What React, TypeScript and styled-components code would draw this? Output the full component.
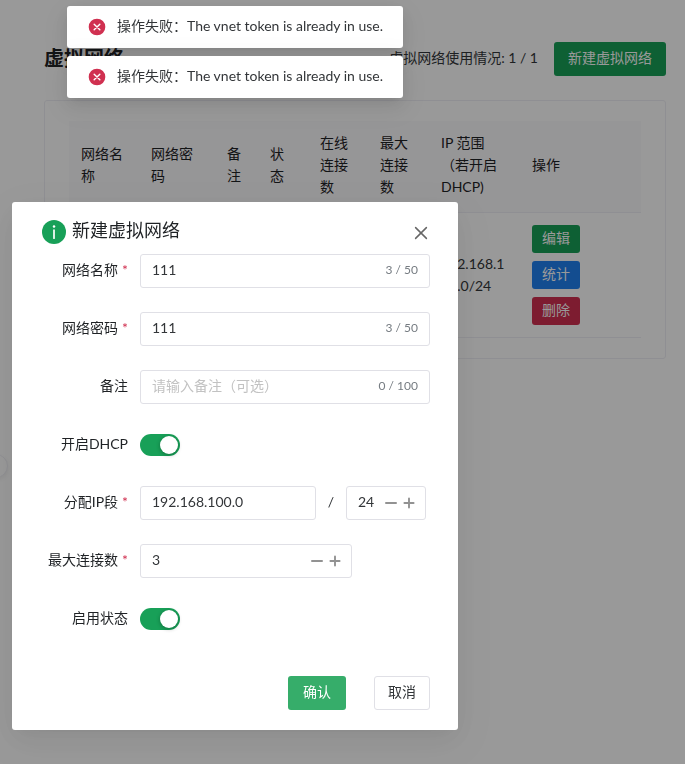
import React, { useState } from "react";
import styled, { createGlobalStyle } from "styled-components";

const GlobalStyle = createGlobalStyle`
  *, *::before, *::after { box-sizing: border-box; }
  html, body { margin: 0; background: #fff; }
  body, button, input {
    font-family: Lato, "Noto Sans CJK SC", sans-serif;
    font-size: 14px;
    line-height: 22px;
  }
  body { color: #333639; overflow: hidden; }
`;

const tones = {
  primary: "#18a058",
  hover: "#36ad6a",
  info: "#2080f0",
  error: "#d03050",
};

/* ---------- page ---------- */

const Page = styled.main`
  padding: 42px 19px 24px 44px;
`;

const PageHeader = styled.header`
  display: flex;
  align-items: center;
  justify-content: space-between;
  height: 34px;
  margin-bottom: 24px;
`;

const PageTitle = styled.h1`
  margin: 0;
  padding-bottom: 2px;
  font-size: 20px;
  line-height: 32px;
  font-weight: 700;
  color: #1f2225;
`;

const HeaderActions = styled.div`
  display: flex;
  align-items: center;
  gap: 16px;
`;

const Usage = styled.span`
  padding-bottom: 2px;
`;

const Button = styled.button<{ $tone?: keyof typeof tones; $small?: boolean; $pad?: number }>`
  height: ${(p) => (p.$small ? 28 : 34)}px;
  padding: 0 ${(p) => p.$pad ?? (p.$small ? 10 : 14)}px 2px;
  border: ${(p) => (p.$tone ? "0" : "1px solid #e0e0e6")};
  border-radius: 3px;
  background: ${(p) => (p.$tone ? tones[p.$tone] : "#fff")};
  color: ${(p) => (p.$tone ? "#fff" : "#333639")};
  white-space: nowrap;
  cursor: pointer;
`;

const Card = styled.section`
  padding: 20px 24px;
  border: 1px solid #efeff5;
  border-radius: 3px;
`;

const Table = styled.table`
  width: 100%;
  table-layout: fixed;
  border-collapse: separate;
  border-spacing: 0;
`;

const Col = styled.col<{ $w?: number }>`
  width: ${(p) => (p.$w ? `${p.$w}px` : "auto")};
`;

const Th = styled.th`
  padding: 11px 12px 14px;
  background: #fafafc;
  border-bottom: 1px solid #efeff5;
  color: #1f2225;
  font-weight: 400;
  text-align: left;
`;

const Td = styled.td`
  padding: 12px;
  border-bottom: 1px solid #efeff5;
  word-break: break-all;
`;

const RowActions = styled.div`
  display: flex;
  flex-direction: column;
  align-items: flex-start;
  gap: 8px;
`;

const SiderToggle = styled.button`
  position: absolute;
  top: 454px;
  left: -16px;
  width: 24px;
  height: 24px;
  padding: 0;
  border: 1px solid #efeff5;
  border-radius: 50%;
  background: #fff;
  box-shadow: 0 2px 4px 0 rgba(0, 0, 0, 0.06);
`;

/* ---------- dialog ---------- */

const Overlay = styled.div`
  position: fixed;
  inset: 0;
  padding: 202px 12px 24px;
  background: rgba(0, 0, 0, 0.4);
`;

const Dialog = styled.section`
  position: relative;
  max-width: 446px;
  padding: 16px 28px 20px;
  border-radius: 3px;
  background: #fff;
  box-shadow: 0 6px 16px -9px rgba(0, 0, 0, 0.08), 0 9px 28px 0 rgba(0, 0, 0, 0.05),
    0 12px 48px 16px rgba(0, 0, 0, 0.03);
`;

const DialogTitle = styled.h2`
  display: flex;
  align-items: center;
  gap: 4px;
  margin: 0 0 8px;
  font-size: 18px;
  line-height: 28px;
  font-weight: 400;
  color: #1f2225;
`;

const TitleText = styled.span`
  padding-bottom: 4px;
  line-height: 24px;
`;

const CloseButton = styled.button`
  position: absolute;
  top: 20px;
  right: 26px;
  display: grid;
  place-items: center;
  width: 22px;
  height: 22px;
  padding: 0;
  border: 0;
  background: none;
  color: #666;
  cursor: pointer;
`;

const Form = styled.form`
  display: flex;
  flex-direction: column;
  gap: 24px;
`;

const FormItem = styled.div`
  display: grid;
  grid-template-columns: 100px 1fr;
  align-items: center;
  min-height: 34px;
`;

const Label = styled.label`
  padding: 0 12px 2px 0;
  text-align: right;
  white-space: nowrap;
  color: #1f2225;
`;

const Required = styled.span`
  margin-left: 4px;
  color: #d03050;
`;

const Field = styled.div<{ $w?: number }>`
  display: flex;
  align-items: center;
  width: ${(p) => (p.$w ? `${p.$w}px` : "100%")};
  height: 34px;
  padding: 0 7px 0 11px;
  border: 1px solid #e0e0e6;
  border-radius: 3px;
`;

const TextInput = styled.input`
  flex: 1;
  min-width: 0;
  width: 0;
  height: 32px;
  padding: 0 0 4px;
  border: 0;
  outline: 0;
  background: none;
  color: #333639;
  appearance: textfield;
  &::placeholder { color: #c2c2c2; opacity: 1; }
  &::-webkit-inner-spin-button { display: none; }
`;

const Count = styled.span`
  padding: 0 4px 2px 8px;
  font-size: 12px;
  color: #767c82;
`;

const StepButton = styled.button`
  display: grid;
  place-items: center;
  width: 18px;
  height: 18px;
  padding: 0;
  border: 0;
  background: none;
  color: #929292;
  cursor: pointer;
`;

const Inline = styled.div`
  display: flex;
  align-items: center;
`;

const Slash = styled.span`
  width: 30px;
  padding-bottom: 2px;
  text-align: center;
`;

const Switch = styled.input`
  display: flex;
  align-items: center;
  width: 40px;
  height: 22px;
  margin: 0;
  padding: 2px;
  appearance: none;
  border-radius: 11px;
  background: #dbdbdb;
  cursor: pointer;
  &::before {
    content: "";
    width: 18px;
    height: 18px;
    border-radius: 50%;
    background: #fff;
    box-shadow: 0 1px 4px 0 rgba(0, 0, 0, 0.3);
  }
  &:checked { justify-content: flex-end; background: #18a058; }
`;

const DialogFooter = styled.footer`
  display: flex;
  justify-content: flex-end;
  gap: 28px;
  margin-top: 16px;
`;

/* ---------- messages ---------- */

const MessageStack = styled.div`
  position: fixed;
  top: 6px;
  left: 67px;
  display: flex;
  flex-direction: column;
  align-items: flex-start;
  gap: 8px;
`;

const Message = styled.div`
  display: flex;
  align-items: center;
  gap: 10px;
  height: 42px;
  padding: 0 20px;
  border-radius: 3px;
  background: #fff;
  white-space: nowrap;
  box-shadow: 0 3px 6px -4px rgba(0, 0, 0, 0.12), 0 6px 16px 0 rgba(0, 0, 0, 0.08),
    0 9px 28px 8px rgba(0, 0, 0, 0.05);
`;

const MessageText = styled.span`
  padding-bottom: 2px;
`;

/* ---------- icons ---------- */

const ErrorIcon = () => (
  <svg width="20" height="20" viewBox="0 0 48 48" aria-hidden="true">
    <circle cx="24" cy="24" r="20" fill="#d03050" />
    <path d="M17.2 17.2 30.8 30.8M30.8 17.2 17.2 30.8" stroke="#fff" strokeWidth="3.4" strokeLinecap="round" />
  </svg>
);

const InfoIcon = () => (
  <svg width="28" height="28" viewBox="0 0 28 28" aria-hidden="true">
    <circle cx="14" cy="14" r="12" fill="#18a058" />
    <circle cx="14" cy="8.5" r="1.25" fill="#fff" />
    <path d="M14 12v8.2" stroke="#fff" strokeWidth="1.7" strokeLinecap="round" />
  </svg>
);

const CloseIcon = () => (
  <svg width="18" height="18" viewBox="0 0 12 12" aria-hidden="true">
    <path d="M2.4 2.4 9.6 9.6M9.6 2.4 2.4 9.6" stroke="currentColor" strokeWidth="1" strokeLinecap="round" />
  </svg>
);

const MinusIcon = () => (
  <svg width="18" height="18" viewBox="0 0 18 18" aria-hidden="true">
    <path d="M4 9h10" stroke="currentColor" strokeWidth="2" strokeLinecap="round" />
  </svg>
);

const PlusIcon = () => (
  <svg width="18" height="18" viewBox="0 0 18 18" aria-hidden="true">
    <path d="M4.4 9h9.2M9 4.4v9.2" stroke="currentColor" strokeWidth="1.9" strokeLinecap="round" />
  </svg>
);

/* ---------- parts ---------- */

const columns = [
  { title: "网络名称", w: 70 },
  { title: "网络密码", w: 76 },
  { title: "备注", w: 43 },
  { title: "状态", w: 50 },
  { title: "在线连接数", w: 60 },
  { title: "最大连接数", w: 61 },
  { title: "IP 范围（若开启 DHCP)", w: 91 },
  { title: "操作" },
];

type ItemProps = { id: string; label: string; required?: boolean; children: React.ReactNode };

const Item = ({ id, label, required, children }: ItemProps) => (
  <FormItem>
    <Label htmlFor={id}>
      {label}
      {required && <Required>*</Required>}
    </Label>
    {children}
  </FormItem>
);

type CountedProps = { id: string; initial?: string; max: number; placeholder?: string };

const CountedInput = ({ id, initial = "", max, placeholder }: CountedProps) => {
  const [value, setValue] = useState(initial);
  return (
    <Field>
      <TextInput
        id={id}
        value={value}
        maxLength={max}
        placeholder={placeholder}
        onChange={(e) => setValue(e.target.value)}
      />
      <Count>{`${value.length} / ${max}`}</Count>
    </Field>
  );
};

type NumberProps = { id: string; initial: number; width: number; label?: string };

const NumberInput = ({ id, initial, width, label }: NumberProps) => {
  const [value, setValue] = useState(initial);
  return (
    <Field $w={width}>
      <TextInput
        id={id}
        type="number"
        aria-label={label}
        value={value}
        onChange={(e) => setValue(Number(e.target.value))}
      />
      <StepButton type="button" aria-label="减少" onClick={() => setValue(value - 1)}>
        <MinusIcon />
      </StepButton>
      <StepButton type="button" aria-label="增加" onClick={() => setValue(value + 1)}>
        <PlusIcon />
      </StepButton>
    </Field>
  );
};

export default function App() {
  return (
    <>
      <GlobalStyle />
      <Page>
        <PageHeader>
          <PageTitle>虚拟网络</PageTitle>
          <HeaderActions>
            <Usage>虚拟网络使用情况: 1 / 1</Usage>
            <Button $tone="primary">新建虚拟网络</Button>
          </HeaderActions>
        </PageHeader>
        <Card>
          <Table>
            <colgroup>
              {columns.map((c) => (
                <Col key={c.title} $w={c.w} />
              ))}
            </colgroup>
            <thead>
              <tr>
                {columns.map((c) => (
                  <Th key={c.title} scope="col">{c.title}</Th>
                ))}
              </tr>
            </thead>
            <tbody>
              <tr>
                <Td />
                <Td />
                <Td />
                <Td />
                <Td />
                <Td />
                <Td>192.168.100.0/24</Td>
                <Td>
                  <RowActions>
                    <Button $small $tone="primary">编辑</Button>
                    <Button $small $tone="info">统计</Button>
                    <Button $small $tone="error">删除</Button>
                  </RowActions>
                </Td>
              </tr>
            </tbody>
          </Table>
        </Card>
        <SiderToggle aria-label="展开侧栏" />
      </Page>

      <Overlay>
        <Dialog role="dialog" aria-modal="true" aria-labelledby="dialog-title">
          <DialogTitle>
            <InfoIcon />
            <TitleText id="dialog-title">新建虚拟网络</TitleText>
          </DialogTitle>
          <CloseButton type="button" aria-label="关闭">
            <CloseIcon />
          </CloseButton>
          <Form onSubmit={(e) => e.preventDefault()}>
            <Item id="name" label="网络名称" required>
              <CountedInput id="name" initial="111" max={50} />
            </Item>
            <Item id="password" label="网络密码" required>
              <CountedInput id="password" initial="111" max={50} />
            </Item>
            <Item id="remark" label="备注">
              <CountedInput id="remark" max={100} placeholder="请输入备注（可选）" />
            </Item>
            <Item id="dhcp" label="开启DHCP">
              <Switch id="dhcp" type="checkbox" role="switch" defaultChecked />
            </Item>
            <Item id="ip" label="分配IP段" required>
              <Inline>
                <Field $w={176}>
                  <TextInput id="ip" defaultValue="192.168.100.0" />
                </Field>
                <Slash>/</Slash>
                <NumberInput id="mask" label="掩码位数" initial={24} width={80} />
              </Inline>
            </Item>
            <Item id="max" label="最大连接数" required>
              <NumberInput id="max" initial={3} width={212} />
            </Item>
            <Item id="enabled" label="启用状态">
              <Switch id="enabled" type="checkbox" role="switch" defaultChecked />
            </Item>
            <DialogFooter>
              <Button type="submit" $tone="hover" $pad={15}>确认</Button>
              <Button type="button" $pad={13}>取消</Button>
            </DialogFooter>
          </Form>
        </Dialog>
      </Overlay>

      <MessageStack role="status">
        <Message>
          <ErrorIcon />
          <MessageText>操作失败：The vnet token is already in use.</MessageText>
        </Message>
        <Message>
          <ErrorIcon />
          <MessageText>操作失败：The vnet token is already in use.</MessageText>
        </Message>
      </MessageStack>
    </>
  );
}
